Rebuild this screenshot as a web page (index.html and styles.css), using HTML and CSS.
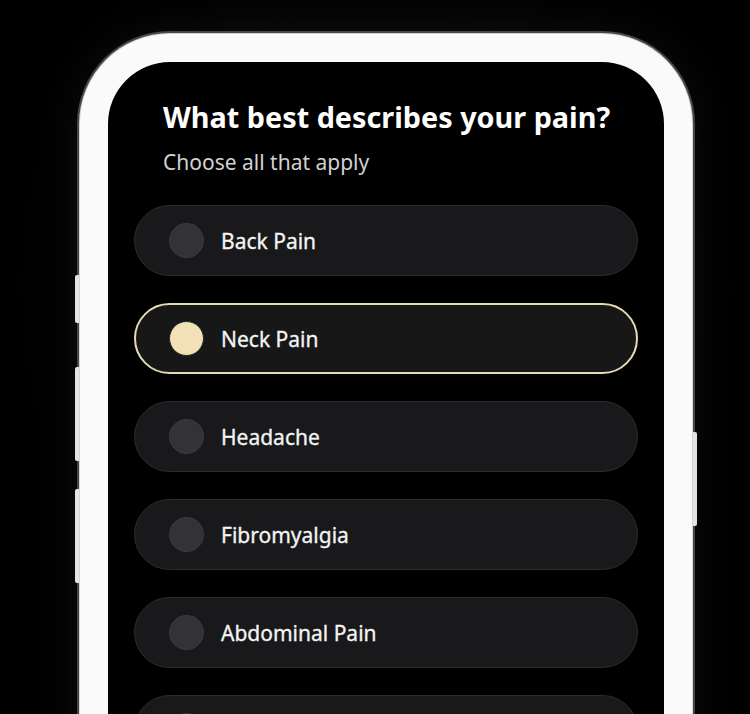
FILE: index.html
```html
<!DOCTYPE html>
<html lang="en">
<head>
<meta charset="utf-8">
<title>Pain survey</title>
<link rel="stylesheet" href="styles.css">
</head>
<body>
<div class="stage">
  <div class="phone">
    <span class="btn btn-l1"></span>
    <span class="btn btn-l2"></span>
    <span class="btn btn-l3"></span>
    <span class="btn btn-r1"></span>
    <div class="screen">
      <h1 class="title">What best describes your pain?</h1>
      <p class="subtitle">Choose all that apply</p>
      <div class="options">
        <div class="option"><span class="dot"></span><span class="label">Back Pain</span></div>
        <div class="option selected"><span class="dot"></span><span class="label">Neck Pain</span></div>
        <div class="option"><span class="dot"></span><span class="label">Headache</span></div>
        <div class="option"><span class="dot"></span><span class="label">Fibromyalgia</span></div>
        <div class="option"><span class="dot"></span><span class="label">Abdominal Pain</span></div>
        <div class="option"><span class="dot"></span></div>
      </div>
    </div>
  </div>
</div>
</body>
</html>
```
FILE: styles.css
```css
html, body {
  margin: 0;
  padding: 0;
  background: #000;
}
body {
  font-family: "Noto Sans", "Open Sans", sans-serif;
  color: #fff;
}
.stage {
  width: 750px;
  height: 714px;
  overflow: hidden;
  padding: 34px 0 0 80px;
  box-sizing: border-box;
  background: radial-gradient(ellipse at 50% 40%, #0a0a0a 0%, #000 70%);
}
.phone {
  position: relative;
  width: 612px;
  height: 760px;
  box-sizing: border-box;
  border: 28px solid #fafafa;
  border-bottom: none;
  border-radius: 90px 90px 0 0;
  background: #000;
  box-shadow: 0 0 0 1px #d4d4d4, 0 0 0 3px rgba(220, 220, 220, 0.3), 0 0 50px rgba(255, 255, 255, 0.06);
}
.btn {
  position: absolute;
  width: 4px;
  background: #e4e4e4;
}
.btn-l1 { left: -33px; top: 213px; height: 48px; border-radius: 2px 0 0 2px; }
.btn-l2 { left: -33px; top: 305px; height: 94px; border-radius: 2px 0 0 2px; }
.btn-l3 { left: -33px; top: 427px; height: 94px; border-radius: 2px 0 0 2px; }
.btn-r1 { right: -33px; top: 370px; height: 94px; border-radius: 0 2px 2px 0; }
.screen {
  padding: 35px 26px 0 26px;
}
.title {
  margin: 0 0 0 29px;
  font-size: 28.8px;
  line-height: 40px;
  font-weight: 700;
  color: #fff;
}
.subtitle {
  margin: 11px 0 0 29px;
  font-size: 21px;
  line-height: 28px;
  color: #d2d2d2;
}
.options {
  margin-top: 29px;
  display: flex;
  flex-direction: column;
  gap: 27px;
}
.option {
  height: 71px;
  box-sizing: border-box;
  border: 1px solid #2c2c2e;
  border-radius: 36px;
  background: #19191b;
  display: flex;
  align-items: center;
  padding-left: 34px;
  gap: 17px;
}
.option.selected {
  border: 2px solid #e6dab4;
  background: #171718;
  padding-left: 33px;
}
.dot {
  width: 35px;
  height: 35px;
  box-sizing: border-box;
  border-radius: 50%;
  background: #333335;
  border: 1px solid #3b3b3d;
  flex: none;
}
.selected .dot {
  background: #f2e0b6;
  border: 1px solid #1b2a1a;
}
.label {
  font-size: 21px;
  font-weight: 400;
  color: #f4f4f4;
  -webkit-text-stroke: 0.3px #f4f4f4;
}
```
